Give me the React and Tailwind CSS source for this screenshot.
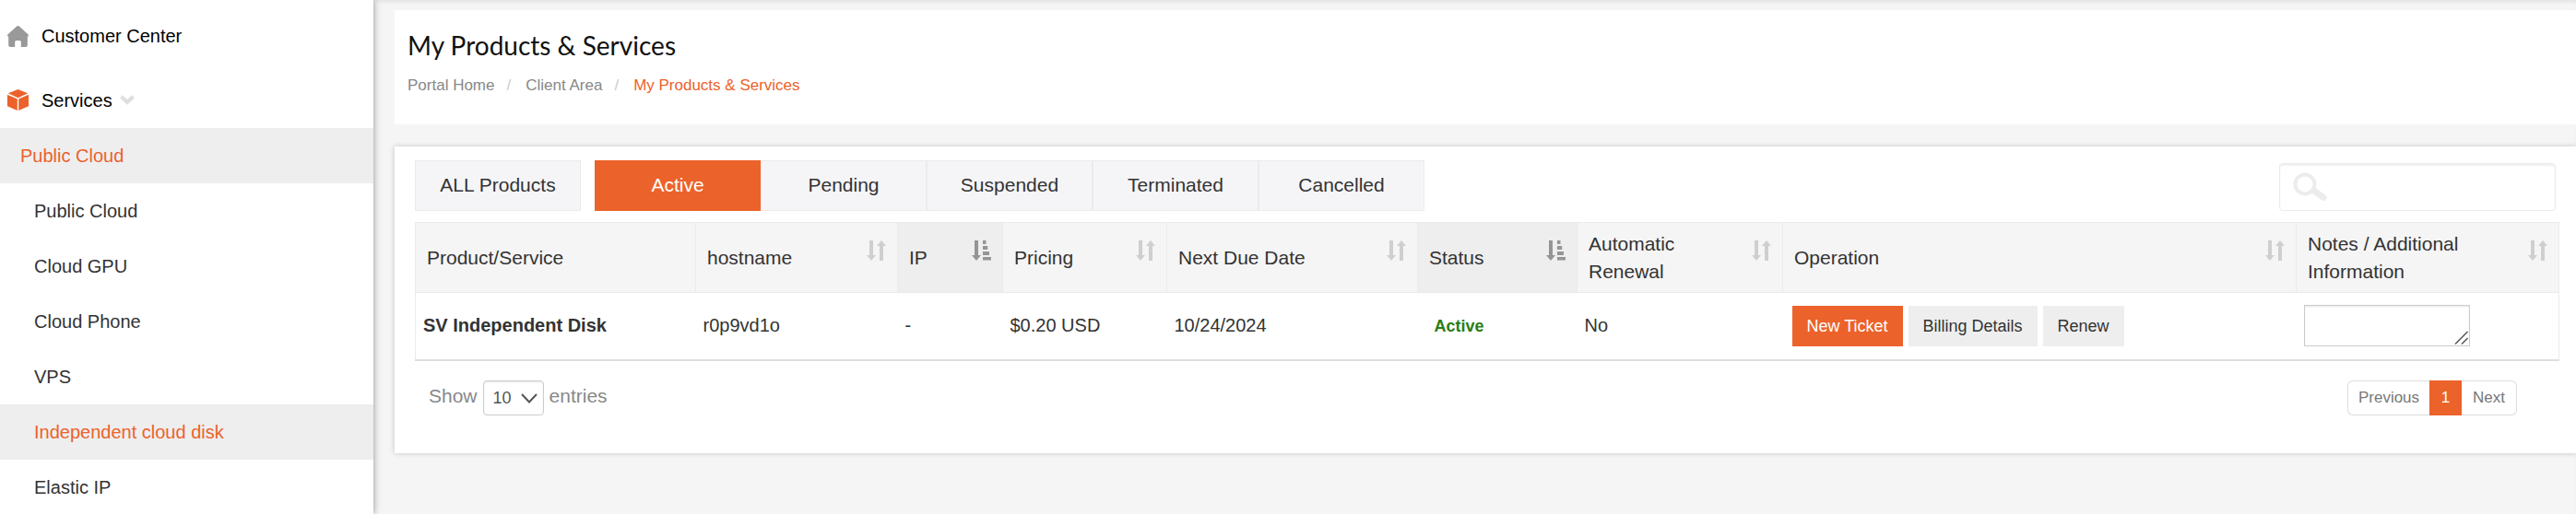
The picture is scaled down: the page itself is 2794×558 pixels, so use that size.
import { useState } from "react";

const services = [
  "Public Cloud",
  "Cloud GPU",
  "Cloud Phone",
  "VPS",
  "Independent cloud disk",
  "Elastic IP",
];

const statuses = ["Active", "Pending", "Suspended", "Terminated", "Cancelled"];

const columns = [
  { label: "Product/Service", width: "w-[304px]" },
  { label: "hostname", width: "w-[219px]", sort: "both" },
  { label: "IP", width: "w-[114px]", sort: "asc" },
  { label: "Pricing", width: "w-[178px]", sort: "both" },
  { label: "Next Due Date", width: "w-[272px]", sort: "both" },
  { label: "Status", width: "w-[173px]", sort: "asc" },
  { label: "Automatic Renewal", width: "w-[223px]", sort: "both" },
  { label: "Operation", width: "w-[557px]", sort: "both" },
  { label: "Notes / Additional Information", width: "w-[285px]", sort: "both" },
];

const products = [
  {
    name: "SV Independent Disk",
    hostname: "r0p9vd1o",
    ip: "-",
    price: "$0.20 USD",
    due: "10/24/2024",
    status: "Active",
    renewal: "No",
  },
];

function HomeIcon() {
  return (
    <svg width="23" height="23" viewBox="0 0 23 23" fill="#999">
      <path d="M10.200.6a2 2 0 0 1 2.600 0l9.600 8.600c.9.9.7 2.300-.6 2.500V21a2 2 0 0 1-2 2h-5v-5.400a1.600 1.600 0 0 0-1.600-1.600h-3.400a1.600 1.600 0 0 0-1.600 1.600V23H3.200a2 2 0 0 1-2-2v-9.300C-.1 11.500-.3 10.100.6 9.200z" />
    </svg>
  );
}

function CubeIcon() {
  return (
    <svg width="23" height="23" viewBox="0 0 23 23" fill="#ec622b">
      <path d="M11.500 0 22.200 4.300 11.500 9.200.8 4.300z" />
      <path d="M0 5.800 10.800 10.500V23L0 18.300z" />
      <path d="M23 5.800 12.200 10.500V23L23 18.300z" />
    </svg>
  );
}

function SortIcon({ type }) {
  if (type === "asc") {
    return (
      <svg width="21" height="22" viewBox="0 0 21 22" fill="#959595">
        <path d="M3 0h4v16h3l-5 6-5-6h3z" />
        <path d="M12 0h3.500v4H12zM12 6h5.200v4H12zM12 12h7v4H12zM12 18h9v3.500h-9z" />
      </svg>
    );
  }
  return (
    <svg width="21" height="22" viewBox="0 0 21 22" fill="#cfcfcf">
      <path d="M3 0h4v16h3l-5 6-5-6h3z" />
      <path d="M14 22h4V6h3l-5-6-5 6h3z" />
    </svg>
  );
}

function Sidebar() {
  return (
    <nav className="relative w-[405px] shrink-0 bg-white shadow-[0_0_8px_rgba(0,0,0,0.4)]">
      <a href="#home" className="flex h-[78px] items-center gap-[14px] pl-2 text-black">
        <HomeIcon />
        Customer Center
      </a>
      <a href="#services" className="flex h-[61px] items-center pl-2 text-black">
        <CubeIcon />
        <span className="pl-[14px] pr-2">Services</span>
        <svg width="16" height="11" viewBox="0 0 16 11" fill="none" stroke="#dedede" strokeWidth="4">
          <path d="M1.500 1.800 8 8l6.500-6.200" />
        </svg>
      </a>
      <a href="#cloud" className="flex h-[60px] items-center bg-[#eee] pb-px pl-[22px] text-[#ec622b]">
        Public Cloud
      </a>
      {services.map((s) => (
        <a
          key={s}
          href="#service"
          className={
            s === "Independent cloud disk"
              ? "flex h-[60px] items-center bg-[#eee] pb-px pl-[37px] text-[#ec622b]"
              : "flex h-[60px] items-center pb-px pl-[37px]"
          }
        >
          {s}
        </a>
      ))}
    </nav>
  );
}

function Tabs({ active, onChange }) {
  const base = "h-[55px] w-[180px] pb-px text-[21px]";
  const idle = "border border-[#ebebeb] bg-[#f5f5f7]";
  return (
    <div className="flex">
      <button className={`${base} ${active === "all" ? "bg-[#ec622b] text-white" : idle}`} onClick={() => onChange("all")}>
        ALL Products
      </button>
      <div className="ml-[15px] flex">
        {statuses.map((s) => (
          <button
            key={s}
            className={`${base} ${active === s ? "bg-[#ec622b] text-white" : idle}`}
            onClick={() => onChange(s)}
          >
            {s}
          </button>
        ))}
      </div>
    </div>
  );
}

function ProductTable() {
  return (
    <table className="mt-3 w-full table-fixed border border-b-2 border-[#ebebeb] border-b-[#dedede] text-left">
      <thead>
        <tr className="h-[76px]">
          {columns.map((c) => (
            <th
              key={c.label}
              className={`${c.width} ${
                c.sort === "asc" ? "bg-[#eee]" : "bg-[#f5f5f5]"
              } relative border border-[#ebebeb] py-[7px] pl-3 pr-[50px] text-[21px] leading-[30px] font-normal`}
            >
              {c.label}
              {c.sort && (
                <button className="absolute top-[19px] right-3" aria-label={`Sort by ${c.label}`}>
                  <SortIcon type={c.sort} />
                </button>
              )}
            </th>
          ))}
        </tr>
      </thead>
      <tbody>
        {products.map((p) => (
          <tr key={p.hostname} className="h-[73px]">
            <td className="pb-px pl-2 font-bold">{p.name}</td>
            <td className="pb-px pl-2">{p.hostname}</td>
            <td className="pb-px pl-2">{p.ip}</td>
            <td className="pb-px pl-2">{p.price}</td>
            <td className="pb-px pl-2">{p.due}</td>
            <td className="pl-[18px] text-lg font-bold text-[#2b7d12]">{p.status}</td>
            <td className="pb-px pl-2">{p.renewal}</td>
            <td className="pl-[10px]">
              <div className="flex gap-[6px] text-lg">
                <button className="h-[44px] bg-[#ec622b] px-4 text-white">New Ticket</button>
                <button className="h-[44px] bg-[#eee] px-4">Billing Details</button>
                <button className="h-[44px] bg-[#eee] px-4">Renew</button>
              </div>
            </td>
            <td className="pl-2">
              <div className="relative w-[180px]">
                <textarea
                  aria-label="Notes"
                  className="block h-[45px] w-full resize-none border border-[#ccc] shadow-[inset_0_1px_2px_rgba(0,0,0,0.1)]"
                />
                <svg
                  className="pointer-events-none absolute right-[2px] bottom-[2px]"
                  width="15"
                  height="15"
                  viewBox="0 0 15 15"
                  stroke="#555"
                  strokeWidth="1.500"
                >
                  <path d="M1 14.500 14.500 1M8 14.500l6.500-6.500" />
                </svg>
              </div>
            </td>
          </tr>
        ))}
      </tbody>
    </table>
  );
}

export default function App() {
  const [tab, setTab] = useState("Active");

  return (
    <div className="flex h-screen overflow-hidden bg-[#f5f5f5] font-['Liberation_Sans',sans-serif] text-xl text-[#333]">
      <Sidebar />

      <main className="min-w-0 flex-1 pt-[11px] pl-[23px] shadow-[inset_0_4px_4px_-2px_rgba(0,0,0,0.08)]">
        <header className="h-[124px] bg-white pt-[21px] pl-[14px]">
          <h1 className="font-['Lato',sans-serif] text-[28px] leading-[34px] text-[#111]">
            My Products &amp; Services
          </h1>
          <ol className="mt-[14px] flex text-[17px] leading-[26px] text-[#888]">
            <li><a href="#portal">Portal Home</a></li>
            <li className="pr-4 pl-[13px] text-[#ccc]">/</li>
            <li><a href="#client">Client Area</a></li>
            <li className="pr-4 pl-[13px] text-[#ccc]">/</li>
            <li className="text-[#ec622b]">My Products &amp; Services</li>
          </ol>
        </header>

        <section className="mt-6 h-[333px] bg-white pt-[15px] pr-[19px] pl-[22px] shadow-[0_0_6px_rgba(0,0,0,0.2)]">
          <div className="flex items-end justify-between">
            <Tabs active={tab} onChange={setTab} />
            <label className="mr-[3px] flex h-[52px] w-[300px] items-center rounded-sm border border-[#ebebeb] pl-[14px] shadow-[inset_0_2px_2px_rgba(0,0,0,0.06)]">
              <svg width="38" height="32" viewBox="0 0 38 32" fill="none" stroke="#ebecee">
                <circle cx="13" cy="13" r="10.500" strokeWidth="4" />
                <path d="m23 20 10 7.500" strokeWidth="7" strokeLinecap="round" />
              </svg>
              <input type="search" aria-label="Search" className="min-w-0 flex-1 px-2 outline-none" />
            </label>
          </div>

          <ProductTable />

          <div className="mt-[21px] flex justify-between pr-[45px] pl-[15px]">
            <label className="flex text-[21px] leading-[34px] text-[#888]">
              Show
              <span className="relative mx-[6px] block">
                <select className="block h-[38px] w-[66px] appearance-none rounded border border-[#ccc] pl-[10px] text-lg text-[#555] shadow-[inset_0_1px_2px_rgba(0,0,0,0.1)]">
                  <option>10</option>
                  <option>25</option>
                  <option>50</option>
                </select>
                <svg
                  className="pointer-events-none absolute top-[14px] right-[7px]"
                  width="18"
                  height="11"
                  viewBox="0 0 18 11"
                  fill="none"
                  stroke="#555"
                  strokeWidth="2"
                >
                  <path d="m1 1 8 8.500L17 1" />
                </svg>
              </span>
              entries
            </label>

            <div className="flex h-[38px] text-[17px] text-[#777]">
              <button className="w-[89px] rounded-l-md border border-r-0 border-[#ddd]">Previous</button>
              <button className="w-[35px] bg-[#ec622b] text-white">1</button>
              <button className="w-[60px] rounded-r-md border border-l-0 border-[#ddd]">Next</button>
            </div>
          </div>
        </section>
      </main>
    </div>
  );
}
